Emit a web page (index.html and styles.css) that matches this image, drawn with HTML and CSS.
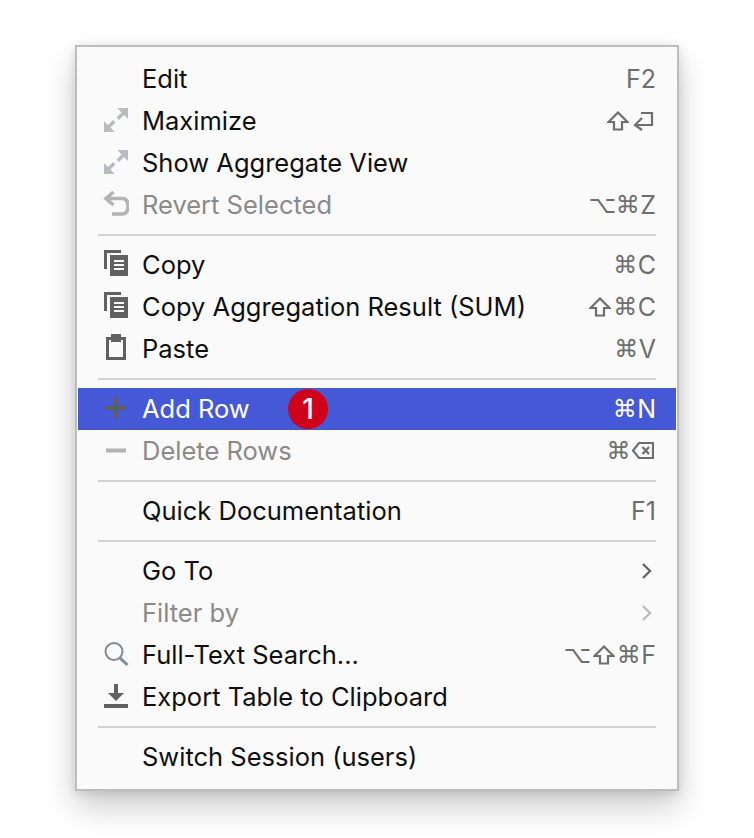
FILE: index.html
```html
<!DOCTYPE html>
<html lang="en">
<head>
    <meta charset="UTF-8">
    <title>Table context menu</title>
    <link rel="stylesheet" href="styles.css">
</head>
<body>
    <svg class="defs" width="0" height="0">
        <symbol id="i-expand" viewBox="0 0 26 26">
            <path d="M25 2v11l-4-4-5 5-2.500-2.500 5-5-4-4.500zM1 26V15l4 4 5-5 2.500 2.500-5 5 4 4.500z" fill="#b8bcc0"/>
        </symbol>
        <symbol id="i-revert" viewBox="0 0 26 26">
            <path d="M10.500 2 3 8.500 10.500 15M3.500 8.500H19c4 0 6 2.500 6 7.500 0 5-2 8-6 8H9" fill="none" stroke="#b4b4b4" stroke-width="3.600"/>
        </symbol>
        <symbol id="i-copy" viewBox="0 0 26 26">
            <path d="M1 0h17v3H4v16H1z" fill="#616161"/>
            <path d="M7 5h18v21H7zM11 10v2h10v-2zM11 14v2h10v-2zM11 18v2h10v-2z" fill="#616161" fill-rule="evenodd"/>
        </symbol>
        <symbol id="i-paste" viewBox="0 0 26 26">
            <path d="M3 3h5V0h10v3h5v23H3zM6 6v17h14V6h-2v2H8V6z" fill="#616161" fill-rule="evenodd"/>
        </symbol>
        <symbol id="i-search" viewBox="0 0 26 26">
            <circle cx="11" cy="11.500" r="8.500" fill="none" stroke="#7d8d97" stroke-width="2"/>
            <path d="m17 18 7.500 7" stroke="#7d8d97" stroke-width="3" fill="none"/>
        </symbol>
        <symbol id="i-export" viewBox="0 0 26 26">
            <path d="M11 2h4v9h6l-8 8-8-8h6zM1 22h24v4H1z" fill="#616161"/>
        </symbol>
        <symbol id="k-shift" viewBox="0 0 22 20">
            <path d="M11 1.500 1.500 11H7v7.500h8V11h5.500z" fill="none" stroke="currentColor" stroke-width="2.200"/>
        </symbol>
    </svg>

    <div class="menu">
        <div class="row"><span class="label">Edit</span><span class="keys">F2</span></div>
        <div class="row">
            <svg class="icon"><use href="#i-expand"/></svg>
            <span class="label">Maximize</span>
            <span class="keys">
                <svg class="key"><use href="#k-shift"/></svg>
                <svg class="key" viewBox="0 0 22 20"><path d="M9 2h11v12H3M10 7l-7 7 7 5" fill="none" stroke="currentColor" stroke-width="2.200"/></svg>
            </span>
        </div>
        <div class="row">
            <svg class="icon"><use href="#i-expand"/></svg>
            <span class="label">Show Aggregate View</span>
        </div>
        <div class="row disabled">
            <svg class="icon"><use href="#i-revert"/></svg>
            <span class="label">Revert Selected</span>
            <span class="keys"><span class="sym">⌥⌘</span>Z</span>
        </div>
        <div class="sep"></div>
        <div class="row">
            <svg class="icon"><use href="#i-copy"/></svg>
            <span class="label">Copy</span>
            <span class="keys"><span class="sym">⌘</span>C</span>
        </div>
        <div class="row">
            <svg class="icon"><use href="#i-copy"/></svg>
            <span class="label">Copy Aggregation Result (SUM)</span>
            <span class="keys">
                <svg class="key"><use href="#k-shift"/></svg>
                <span class="sym">⌘</span>C
            </span>
        </div>
        <div class="row">
            <svg class="icon"><use href="#i-paste"/></svg>
            <span class="label">Paste</span>
            <span class="keys"><span class="sym">⌘</span>V</span>
        </div>
        <div class="sep"></div>
        <div class="row selected">
            <svg class="icon" viewBox="0 0 26 26"><path d="M11 4h4v8h8v4h-8v8h-4v-8H3v-4h8z" fill="#5f5f5f"/></svg>
            <span class="label">Add Row</span>
            <span class="badge">1</span>
            <span class="keys"><span class="sym">⌘</span>N</span>
        </div>
        <div class="row disabled">
            <svg class="icon" viewBox="0 0 26 26"><path d="M3 12.500h20v4H3z" fill="#b4b4b4"/></svg>
            <span class="label">Delete Rows</span>
            <span class="keys">
                <span class="sym">⌘</span>
                <svg class="key" viewBox="0 0 22 20"><path d="M7 2h14v15H7l-6-7.500zM10.500 6l6.500 7M17 6l-6.500 7" fill="none" stroke="currentColor" stroke-width="2.200"/></svg>
            </span>
        </div>
        <div class="sep"></div>
        <div class="row"><span class="label">Quick Documentation</span><span class="keys">F1</span></div>
        <div class="sep"></div>
        <div class="row">
            <span class="label">Go To</span>
            <svg class="chevron" viewBox="0 0 12 18"><path d="m2 2 7 7-7 7" fill="none" stroke="#666" stroke-width="2.400"/></svg>
        </div>
        <div class="row disabled">
            <span class="label">Filter by</span>
            <svg class="chevron" viewBox="0 0 12 18"><path d="m2 2 7 7-7 7" fill="none" stroke="#bbb" stroke-width="2.400"/></svg>
        </div>
        <div class="row">
            <svg class="icon"><use href="#i-search"/></svg>
            <span class="label">Full-Text Search...</span>
            <span class="keys">
                <span class="sym">⌥</span>
                <svg class="key"><use href="#k-shift"/></svg>
                <span class="sym">⌘</span>F
            </span>
        </div>
        <div class="row">
            <svg class="icon"><use href="#i-export"/></svg>
            <span class="label">Export Table to Clipboard</span>
        </div>
        <div class="sep"></div>
        <div class="row"><span class="label">Switch Session (users)</span></div>
    </div>
</body>
</html>
```

FILE: styles.css
```css
html, body {
    height: 100%;
}

body {
    box-sizing: border-box;
    margin: 0;
    padding: 45px 0 0 75px;
    background-color: #ffffff;
    font-family: Inter, "Liberation Sans", sans-serif;
    font-size: 25.5px;
    overflow: hidden;
}

.defs {
    display: block;
    height: 0;
}

.menu {
    box-sizing: border-box;
    width: 604px;
    height: 746px;
    padding: 11px 1px;
    background-color: #fafafa;
    border: 2px solid #bdbdbd;
    box-shadow: 0 16px 30px rgba(0, 0, 0, 0.2), 0 2px 10px rgba(0, 0, 0, 0.12);
}

.row {
    position: relative;
    display: flex;
    align-items: center;
    height: 42px;
    padding: 0 20px 0 64px;
    color: #0f0f0f;
}

.icon {
    position: absolute;
    left: 25px;
    top: 6px;
    width: 26px;
    height: 26px;
}

.label {
    margin-bottom: 2px;
}

.keys {
    display: flex;
    align-items: center;
    gap: 1px;
    margin-left: auto;
    color: #6e6e6e;
    font-size: 25px;
}

.sym {
    font-family: "DejaVu Sans", sans-serif;
    font-size: 24px;
    letter-spacing: -0.5px;
}

.key {
    width: 22px;
    height: 20px;
    margin: 0 1px;
}

.key:last-child {
    margin-right: 2px;
}

.chevron {
    width: 12px;
    height: 18px;
    margin-left: auto;
    margin-right: 3px;
}

.disabled .label {
    color: #8a8a8a;
}

.selected {
    background-color: #4558d6;
    color: #ffffff;
}

.selected .keys {
    color: #ffffff;
}

.badge {
    position: absolute;
    left: 210px;
    top: 1px;
    display: flex;
    align-items: center;
    justify-content: center;
    width: 40px;
    height: 40px;
    border-radius: 50%;
    background-color: #d0021b;
    color: #ffffff;
    font-size: 28px;
    font-weight: 500;
}

.sep {
    height: 2px;
    margin: 8px 20px;
    background-color: #d1d1d1;
}
```
